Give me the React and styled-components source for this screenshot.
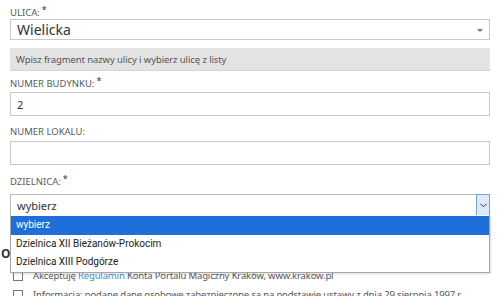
import React from 'react';
import styled, { createGlobalStyle } from 'styled-components';

const GlobalStyle = createGlobalStyle`
  html, body {
    margin: 0;
    padding: 0;
    background: #ffffff;
    overflow: hidden;
  }
  body {
    font-family: "Noto Sans", "Open Sans", sans-serif;
    color: #555555;
  }
`;

const Form = styled.form`
  width: 480px;
  padding: 0 13px 0 10px;
`;

const Label = styled.label`
  display: block;
  font-size: 9.5px;
  line-height: 12px;
  color: #5a5a5a;
  text-transform: uppercase;
  margin-top: ${(p) => p.$top}px;
  sup {
    font-size: 9px;
    color: #333;
    margin-left: 2px;
    vertical-align: 3px;
    line-height: 0;
  }
`;

const Input = styled.div`
  box-sizing: border-box;
  position: relative;
  height: ${(p) => p.$h}px;
  margin-top: ${(p) => p.$top}px;
  border: 1px solid #c9c9c9;
  background: #fff;
  display: flex;
  align-items: center;
  padding-left: 6px;
  font-size: ${(p) => (p.$big ? '14px' : '11px')};
  color: #333;
`;

const Caret = styled.span`
  position: absolute;
  right: 6px;
  top: 50%;
  margin-top: -1px;
  width: 0;
  height: 0;
  border-left: 3px solid transparent;
  border-right: 3px solid transparent;
  border-top: 3px solid #777;
`;

const Hint = styled.div`
  box-sizing: border-box;
  height: 23px;
  margin-top: 8px;
  background: #e3e3e3;
  border-bottom: 1px solid #d4d4d4;
  padding-left: 6px;
  display: flex;
  align-items: center;
  font-size: 9.5px;
  letter-spacing: -0.1px;
  color: #555;
`;

const SelectWrap = styled.div`
  position: relative;
  margin-top: 6px;
`;

const SelectBox = styled.div`
  box-sizing: border-box;
  height: 22px;
  border: 1px solid #b9b9b9;
  display: flex;
  align-items: center;
  padding-left: 6px;
  font-size: 11px;
  color: #333;
`;

const SelectButton = styled.span`
  position: absolute;
  right: 0;
  top: 0;
  box-sizing: border-box;
  width: 14px;
  height: 22px;
  background: #dcebfa;
  border: 1px solid #7aa2cf;
  display: flex;
  align-items: center;
  justify-content: center;
`;

const Options = styled.ul`
  position: absolute;
  z-index: 2;
  top: 21px;
  left: 0;
  right: 0;
  margin: 0;
  padding: 1px 0 0;
  list-style: none;
  background: #fff;
  border: 1px solid #a6a6a6;
  border-top: none;
  box-shadow: 1px 1px 2px rgba(0, 0, 0, 0.15);
  font-family: Roboto, "Noto Sans", sans-serif;
`;

const Option = styled.li`
  height: 18.5px;
  line-height: 18.5px;
  padding-left: 5px;
  font-size: 10px;
  color: ${(p) => (p.$active ? '#fff' : '#222')};
  background: ${(p) => (p.$active ? '#1e6fd9' : 'transparent')};
`;

const Section = styled.div`
  margin-left: -10px;
  margin-top: 31px;
`;

const Heading = styled.h3`
  margin: 0;
  font-size: 12px;
  line-height: 14px;
  font-weight: 700;
  color: #333;
  padding-left: 1px;
`;

const CheckRow = styled.div`
  display: flex;
  align-items: flex-start;
  gap: 10px;
  padding-left: 13px;
  margin-top: ${(p) => p.$top}px;
  font-size: 9.5px;
  letter-spacing: -0.15px;
  line-height: 14px;
  color: #555;
`;

const Box = styled.span`
  box-sizing: border-box;
  width: 10px;
  height: 10px;
  margin-top: 2px;
  border: 1px solid #777;
  background: #fff;
  flex: none;
`;

const CheckText = styled.span`
  width: 430px;
`;

const Link = styled.a`
  color: #3a8fd6;
  text-decoration: none;
`;

export default function App() {
  return (
    <>
      <GlobalStyle />
      <Form>
        <Label $top={7}>
          Ulica:<sup>*</sup>
        </Label>
        <Input $h={21} $top={0} $big>
          Wielicka
          <Caret />
        </Input>
        <Hint>Wpisz fragment nazwy ulicy i wybierz ulicę z listy</Hint>

        <Label $top={7}>
          Numer budynku:<sup>*</sup>
        </Label>
        <Input $h={24} $top={2}>
          2
        </Input>

        <Label $top={10}>Numer lokalu:</Label>
        <Input $h={24} $top={3} />

        <Label $top={11}>
          Dzielnica:<sup>*</sup>
        </Label>
        <SelectWrap>
          <SelectBox>wybierz</SelectBox>
          <SelectButton>
            <svg width="7" height="5" viewBox="0 0 7 5">
              <path d="M0.5 0.8 L3.5 3.8 L6.5 0.8" fill="none" stroke="#333" strokeWidth="1" />
            </svg>
          </SelectButton>
          <Options>
            <Option $active>wybierz</Option>
            <Option>Dzielnica XII Bieżanów-Prokocim</Option>
            <Option>Dzielnica XIII Podgórze</Option>
          </Options>
        </SelectWrap>

        <Section>
          <Heading>Oświadczenia</Heading>
          <CheckRow $top={8}>
            <Box />
            <CheckText>
              Akceptuję <Link>Regulamin</Link> Konta Portalu Magiczny Kraków, www.krakow.pl
            </CheckText>
          </CheckRow>
          <CheckRow $top={5}>
            <Box />
            <CheckText>
              Informacja: podane dane osobowe zabezpieczone są na podstawie ustawy z dnia 29 sierpnia 1997 r. o
              ochronie danych osobowych
            </CheckText>
          </CheckRow>
        </Section>
      </Form>
    </>
  );
}
